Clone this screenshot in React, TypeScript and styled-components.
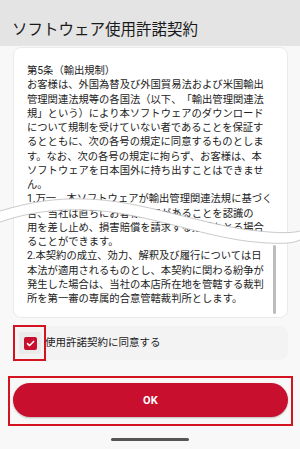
import styled, { createGlobalStyle } from "styled-components";

const GlobalStyle = createGlobalStyle`
  html, body {
    margin: 0;
    padding: 0;
    background: #f8f8f8;
  }
  body {
    font-family: Roboto, "Noto Sans CJK JP", sans-serif;
    color: #222222;
  }
`;

const Screen = styled.div`
  position: relative;
  width: 300px;
  height: 449px;
  display: flex;
  flex-direction: column;
  background: #f8f8f8;
  overflow: hidden;
`;

const Header = styled.header`
  height: 46px;
  box-sizing: border-box;
  padding: 20px 12px 0;
  background: #e4e4e4;
`;

const Title = styled.h1`
  margin: 0;
  font-size: 15.5px;
  line-height: 20px;
  font-weight: 400;
  color: #1a1a1a;
  letter-spacing: 0;
`;

const Body = styled.main`
  display: flex;
  flex-direction: column;
  padding: 1px 12px 0 13px;
`;

const Card = styled.section`
  position: relative;
  height: 271px;
  box-sizing: border-box;
  padding: 16px 14px 0 13px;
  background: #ffffff;
  border: 1px solid #ebebeb;
  border-radius: 8px;
  overflow: hidden;
`;

const Line = styled.div`
  font-size: 10.3px;
  line-height: 14.25px;
  white-space: nowrap;
  color: #222222;
  text-spacing-trim: space-all;
`;

const Thumb = styled.div`
  position: absolute;
  right: 11px;
  top: 197px;
  width: 3px;
  height: 69px;
  border-radius: 2px;
  background: #bdbdbd;
`;

const AgreeRow = styled.label`
  position: relative;
  margin-top: 8px;
  height: 34px;
  display: flex;
  align-items: center;
  gap: 4px;
  padding-left: 6px;
  background: #f3f3f3;
  border-radius: 8px;
`;

const CheckWrap = styled.span`
  width: 22px;
  height: 22px;
  display: flex;
  align-items: center;
  justify-content: center;
  background: #ebebeb;
  border-radius: 2px;
`;

const CheckBox = styled.span`
  width: 13px;
  height: 13px;
  display: flex;
  align-items: center;
  justify-content: center;
  background: #c8102e;
  border-radius: 2px;
`;

const AgreeText = styled.span`
  font-size: 10.5px;
  line-height: 14px;
  color: #222222;
`;

const Highlight = styled.div<{ $top: number; $left: number; $right: number; $bottom: number }>`
  position: absolute;
  top: ${({ $top }) => $top}px;
  left: ${({ $left }) => $left}px;
  right: ${({ $right }) => $right}px;
  bottom: ${({ $bottom }) => $bottom}px;
  border: 2px solid #d3131f;
  pointer-events: none;
`;

const ButtonArea = styled.div`
  position: relative;
  margin-top: 23px;
`;

const OkButton = styled.button`
  width: 100%;
  height: 34px;
  border: none;
  border-radius: 17px;
  background: #c8102e;
  color: #ffffff;
  font-family: Roboto, sans-serif;
  font-size: 11px;
  font-weight: 700;
  letter-spacing: 0.3px;
  box-shadow: 0 1px 2px rgba(0, 0, 0, 0.25);
`;

const HomeBar = styled.div`
  align-self: center;
  margin-top: auto;
  margin-bottom: 8px;
  width: 78px;
  height: 3px;
  border-radius: 2px;
  background: #555555;
`;

const Cut = styled.svg`
  position: absolute;
  left: 0;
  top: 190px;
  width: 300px;
  height: 70px;
  pointer-events: none;
`;

const lines = [
  "第5条（輸出規制）",
  "お客様は、外国為替及び外国貿易法および米国輸出",
  "管理関連法規等の各国法（以下、「輸出管理関連法",
  "規」という）により本ソフトウェアのダウンロード",
  "について規制を受けていない者であることを保証す",
  "るとともに、次の各号の規定に同意するものとしま",
  "す。なお、次の各号の規定に拘らず、お客様は、本",
  "ソフトウェアを日本国外に持ち出すことはできませ",
  "ん。",
  "1.万一、本ソフトウェアが輸出管理関連法規に基づく",
  "合、当社は直ちにお客様違反があることを認識の",
  "用を差し止め、損害賠償を請求する措置をとる場合",
  "ることができます。",
  "2.本契約の成立、効力、解釈及び履行については日",
  "本法が適用されるものとし、本契約に関わる紛争が",
  "発生した場合は、当社の本店所在地を管轄する裁判",
  "所を第一審の専属的合意管轄裁判所とします。",
];

const topEdge = "M0,211 C30,202 55,198 85,199 C140,200 200,224 250,230 C270,232.5 290,234 300,231";
const bottomEdge = "M0,222 C30,212 55,209 85,210 C140,211 200,236 250,241.5 C270,243.5 290,245 300,240";
const band =
  topEdge +
  " L300,240 C290,245 270,243.5 250,241.5 C200,236 140,211 85,210 C55,209 30,212 0,222 Z";

const App = () => {
  return (
    <>
      <GlobalStyle />
      <Screen>
        <Header>
          <Title>ソフトウェア使用許諾契約</Title>
        </Header>
        <Body>
          <Card>
            {lines.map((text, i) => (
              <Line key={i}>{text}</Line>
            ))}
            <Thumb />
          </Card>
          <AgreeRow>
            <CheckWrap>
              <CheckBox>
                <svg width="9" height="9" viewBox="0 0 9 9">
                  <polyline points="1.5,4.6 3.6,6.6 7.6,2.4" fill="none" stroke="#ffffff" strokeWidth="1.5" strokeLinecap="round" strokeLinejoin="round" />
                </svg>
              </CheckBox>
            </CheckWrap>
            <AgreeText>使用許諾契約に同意する</AgreeText>
            <Highlight $top={-1} $left={0} $right={242} $bottom={-1} />
          </AgreeRow>
          <ButtonArea>
            <OkButton>OK</OkButton>
            <Highlight $top={-7} $left={-5} $right={-5} $bottom={-9} />
          </ButtonArea>
        </Body>
        <HomeBar />
        <Cut viewBox="0 190 300 70">
          <path d={band} fill="#ffffff" />
          <path d={topEdge} fill="none" stroke="#bdbdbd" strokeWidth="0.8" />
          <path d={bottomEdge} fill="none" stroke="#bdbdbd" strokeWidth="0.8" />
        </Cut>
      </Screen>
    </>
  );
};

export default App;
